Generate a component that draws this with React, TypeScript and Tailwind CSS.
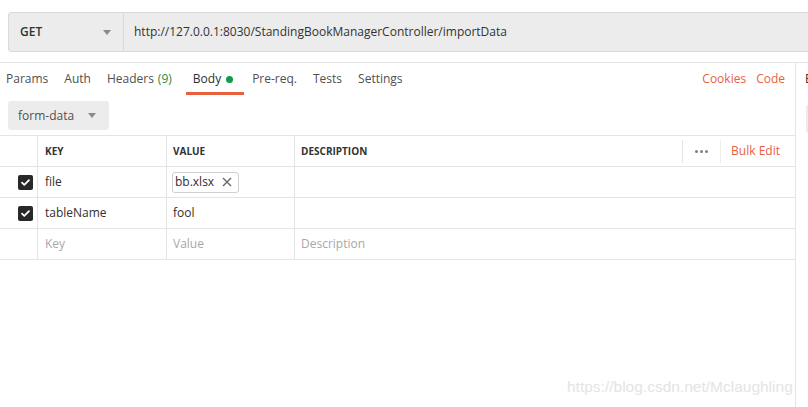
import React from 'react'

const tabs = [
  { label: 'Params' },
  { label: 'Auth' },
  { label: 'Headers', count: '(9)' },
  { label: 'Body', active: true },
  { label: 'Pre-req.' },
  { label: 'Tests' },
  { label: 'Settings' },
]

const Check = () => (
  <div className="w-[15px] h-[15px] rounded-[2px] bg-[#282828] flex items-center justify-center">
    <svg width="11" height="11" viewBox="0 0 12 12" fill="none">
      <path d="M2.2 6.2l2.5 2.4L9.8 3.4" stroke="white" strokeWidth="2" strokeLinecap="round" strokeLinejoin="round" />
    </svg>
  </div>
)

const Caret = () => (
  <svg width="8" height="5" viewBox="0 0 8 5">
    <path d="M0 0h8L4 5z" fill="#8a8a8a" />
  </svg>
)

export default function App() {
  return (
    <div className="relative w-[808px] h-[407px] overflow-hidden bg-white font-['Open_Sans',sans-serif] text-[#303030]">
      {/* Request bar */}
      <div className="flex h-[40px] mt-[12px] ml-[8px]">
        <div className="w-[116px] flex items-center justify-between pl-[11px] pr-[12px] bg-[#ececec] border border-[#d9d9d9] rounded-l-[3px]">
          <span className="text-[12px] font-semibold text-[#333]">GET</span>
          <Caret />
        </div>
        <div className="flex-1 flex items-center pl-[10px] bg-[#ececec] border-y border-[#d9d9d9] text-[12px] text-[#333]">
          http://127.0.0.1:8030/StandingBookManagerController/importData
        </div>
      </div>

      <div className="flex mt-[10px] h-[345px]">
        {/* Left pane */}
        <div className="w-[796px] shrink-0 border-t border-r border-[#e4e4e4]">
          <div className="flex h-[32px] pr-[10px]">
            <div className="flex gap-[16px] pl-[6px]">
              {tabs.map((t) => (
                <div
                  key={t.label}
                  className={
                    t.active
                      ? 'flex items-center pl-[7px] pr-[11px] -ml-[2px] -mr-[8px] text-[12px] text-[#303030] border-b-[3px] border-[#e8613f] pt-[3px]'
                      : 'flex items-center text-[12px] text-[#505050]'
                  }
                >
                  {t.label}
                  {t.count && <span className="ml-[4px] text-[#1e8b4a]">{t.count}</span>}
                  {t.active && <span className="ml-[5px] w-[7px] h-[7px] rounded-full bg-[#0f9b4a]" />}
                </div>
              ))}
            </div>
            <div className="ml-auto flex items-center gap-[10px] text-[12px] text-[#e8613f]">
              <span>Cookies</span>
              <span>Code</span>
            </div>
          </div>

          <div className="mt-[6px] ml-[8px] w-[101px] h-[29px] flex items-center justify-between pl-[10px] pr-[13px] bg-[#ececec] rounded-[3px] text-[12px] text-[#505050]">
            form-data
            <Caret />
          </div>

          {/* Params table */}
          <div className="mt-[5px] border-t border-[#e4e4e4] text-[12px]">
            <div className="flex h-[31px] border-b border-[#e4e4e4]">
              <div className="w-[38px] border-r border-[#e4e4e4]" />
              <div className="w-[129px] border-r border-[#e4e4e4] flex items-center pl-[7px] text-[10px] font-bold text-[#333]">KEY</div>
              <div className="w-[128px] border-r border-[#e4e4e4] flex items-center pl-[6px] text-[10px] font-bold text-[#333]">VALUE</div>
              <div className="flex-1 flex items-center pl-[6px] text-[10px] font-bold text-[#333]">DESCRIPTION</div>
              <div className="flex items-center h-[23px] self-center border-l border-[#e4e4e4]">
                <div className="w-[37px] flex items-center justify-center gap-[2px]">
                  <span className="w-[3px] h-[3px] rounded-full bg-[#808080]" />
                  <span className="w-[3px] h-[3px] rounded-full bg-[#808080]" />
                  <span className="w-[3px] h-[3px] rounded-full bg-[#808080]" />
                </div>
                <div className="h-[23px] border-l border-[#ececec] flex items-center pl-[10px] pr-[15px] text-[12px] text-[#e8613f]">
                  Bulk Edit
                </div>
              </div>
            </div>

            <div className="flex h-[31px] border-b border-[#e4e4e4]">
              <div className="w-[38px] border-r border-[#e4e4e4] flex items-center pl-[18px]">
                <Check />
              </div>
              <div className="w-[129px] border-r border-[#e4e4e4] flex items-center pl-[7px]">file</div>
              <div className="w-[128px] border-r border-[#e4e4e4] flex items-center pl-[5px]">
                <div className="h-[21px] flex items-center gap-[8px] pl-[2px] pr-[6px] border border-[#cfcfcf] rounded-[3px]">
                  bb.xlsx
                  <svg width="10" height="10" viewBox="0 0 10 10">
                    <path d="M1 1l8 8M9 1l-8 8" stroke="#666" strokeWidth="1.4" />
                  </svg>
                </div>
              </div>
              <div className="flex-1" />
            </div>

            <div className="flex h-[31px] border-b border-[#e4e4e4]">
              <div className="w-[38px] border-r border-[#e4e4e4] flex items-center pl-[18px]">
                <Check />
              </div>
              <div className="w-[129px] border-r border-[#e4e4e4] flex items-center pl-[7px]">tableName</div>
              <div className="w-[128px] border-r border-[#e4e4e4] flex items-center pl-[6px]">fool</div>
              <div className="flex-1" />
            </div>

            <div className="flex h-[31px] border-b border-[#e4e4e4] text-[#a8a8a8]">
              <div className="w-[38px] border-r border-[#e4e4e4]" />
              <div className="w-[129px] border-r border-[#e4e4e4] flex items-center pl-[7px]">Key</div>
              <div className="w-[128px] border-r border-[#e4e4e4] flex items-center pl-[6px]">Value</div>
              <div className="flex-1 flex items-center pl-[6px]">Description</div>
            </div>
          </div>
        </div>

        {/* Right pane (cut off) */}
        <div className="flex-1 min-w-0 border-t border-[#e4e4e4] pl-[9px]">
          <div className="h-[32px] flex items-center text-[12px] text-[#303030]">B</div>
          <div className="mt-[10px] ml-[1px] h-[28px] bg-[#ececec] rounded-l-[3px]" />
        </div>
      </div>

      {/* Watermark */}
      <div className="absolute left-[567px] top-[375px] text-[15.5px] text-[#e4e4e4] font-['Liberation_Sans',sans-serif]">
        https://blog.csdn.net/Mclaughling
      </div>
    </div>
  )
}
